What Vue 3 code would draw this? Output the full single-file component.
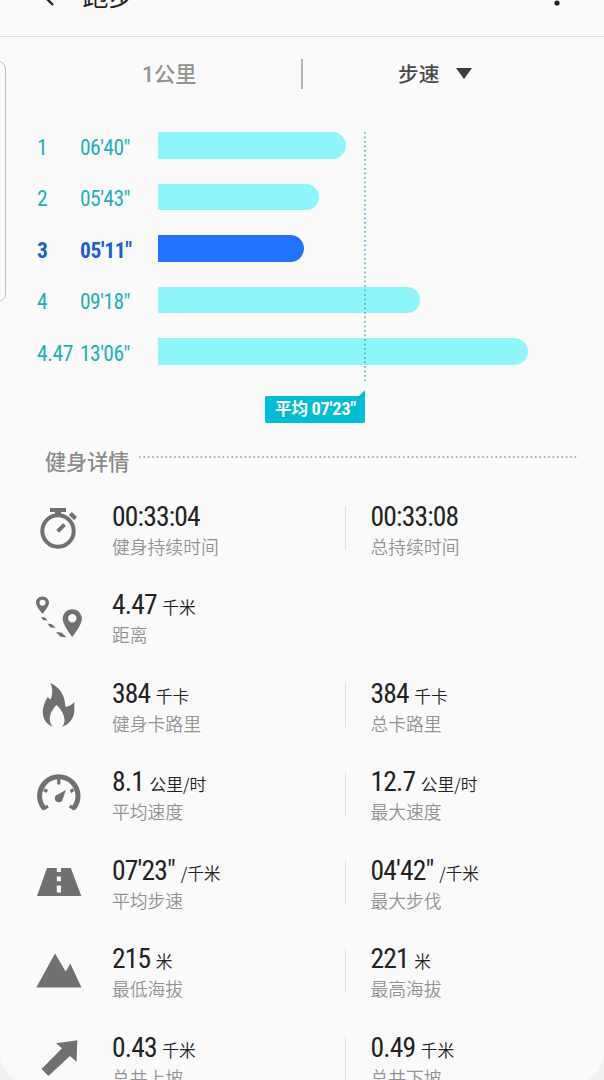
<script setup>
const splits = [
  { id: 1, km: '1', pace: '06\'40"', width: 188 },
  { id: 2, km: '2', pace: '05\'43"', width: 161.5 },
  { id: 3, km: '3', pace: '05\'11"', width: 146.5, best: true },
  { id: 4, km: '4', pace: '09\'18"', width: 262.5 },
  { id: 5, km: '4.47', pace: '13\'06"', width: 370.5 },
]

const rows = [
  { icon: 'watch', cells: [{ v: '00:33:04', l: '健身持续时间' }, { v: '00:33:08', l: '总持续时间' }] },
  { icon: 'route', cells: [{ v: '4.47', u: '千米', l: '距离' }] },
  { icon: 'flame', cells: [{ v: '384', u: '千卡', l: '健身卡路里' }, { v: '384', u: '千卡', l: '总卡路里' }] },
  { icon: 'gauge', cells: [{ v: '8.1', u: '公里/时', l: '平均速度' }, { v: '12.7', u: '公里/时', l: '最大速度' }] },
  { icon: 'road', cells: [{ v: '07\'23"', u: '/千米', l: '平均步速' }, { v: '04\'42"', u: '/千米', l: '最大步伐' }] },
  { icon: 'peak', cells: [{ v: '215', u: '米', l: '最低海拔' }, { v: '221', u: '米', l: '最高海拔' }] },
  { icon: 'arrow', cells: [{ v: '0.43', u: '千米', l: '总共上坡' }, { v: '0.49', u: '千米', l: '总共下坡' }] },
]
</script>

<template>
  <div class="screen">
    <header class="bar">
      <svg class="back" width="20" height="24" viewBox="0 0 20 24"><path d="M14 2 4 12 14 22" fill="none" stroke="#222" stroke-width="2.4" /></svg>
      <h1 class="title">跑步</h1>
      <svg class="more" width="6" height="24" viewBox="0 0 6 24"><circle cx="3" cy="3" r="2.6" /><circle cx="3" cy="12" r="2.6" /><circle cx="3" cy="21" r="2.6" /></svg>
    </header>
    <div class="handle"></div>

    <div class="tabs">
      <div class="tab unit">1公里</div>
      <div class="tab kind">步速<svg class="caret" width="16" height="11" viewBox="0 0 16 11"><path d="M0 0H16L8 11Z" fill="#3c3c3c" /></svg></div>
    </div>

    <section class="chart">
      <div v-for="s in splits" :key="s.id" class="split" :class="{ best: s.best }">
        <span class="km">{{ s.km }}</span>
        <span class="pace">{{ s.pace }}</span>
        <span class="meter" :style="{ width: s.width + 'px' }"></span>
      </div>
      <svg class="avg-line" width="2" height="249" viewBox="0 0 2 249"><path d="M1 0V249" stroke="#2aa3b4" stroke-width="1.3" stroke-dasharray="1.7 2.8" /></svg>
      <div class="avg">平均 <span class="num">07'23"</span><svg class="tip" width="7" height="7" viewBox="0 0 7 7"><path d="M0 7 7 0V7Z" fill="#00bcd4" /></svg></div>
    </section>

    <div class="section-head">
      <h2>健身详情</h2>
      <svg class="dots" width="440" height="2" viewBox="0 0 440 2"><path d="M0 1H440" stroke="#999" stroke-width="1.6" stroke-dasharray="1.6 2.8" /></svg>
    </div>

    <section class="details">
      <div v-for="r in rows" :key="r.icon" class="row">
        <svg class="icon" width="48" height="48" viewBox="0 0 48 48">
          <g v-if="r.icon === 'watch'">
            <circle cx="23" cy="26" r="15.7" fill="none" stroke="#707070" stroke-width="4" />
            <path d="M15 3H31V7H26V11H20V7H15ZM36.8 7 42 12 39 15 33.8 10Z" />
            <path d="M22.6 26.4 29.5 19.6" stroke="#707070" stroke-width="4" />
          </g>
          <g v-else-if="r.icon === 'route'" fill-rule="evenodd">
            <path d="M7.5 2.5C3.8 2.5 1 5.3 1 8.7 1 12.5 7.5 19.7 7.5 19.7S14 12.5 14 8.7C14 5.3 11.2 2.5 7.5 2.5ZM7.5 5.7A3 3 0 1 1 7.5 11.7 3 3 0 1 1 7.5 5.7Z" />
            <path d="M37.3 15.3C31.9 15.3 27.7 19.5 27.7 24.7 27.7 31 37.3 42.9 37.3 42.9S46.9 31 46.9 24.7C46.9 19.5 42.7 15.3 37.3 15.3ZM37.3 20A4.2 4.2 0 1 1 37.3 28.4 4.2 4.2 0 1 1 37.3 20Z" />
            <path d="M6 23 10 23.4 12.8 26.6 8 26ZM12.5 29.5 17 30.2 20.6 34 15 33.3ZM21 38 26.4 38.4 31.5 43.3 25.5 42.8Z" />
          </g>
          <path v-else-if="r.icon === 'flame'" d="M15.2 1C21 3.5 25.5 8 27.8 13 29.8 17.5 30 21 30.6 25 34 24.5 37 22.5 39.4 20 39 25 40 29 38.4 34 36.6 39 32 43.5 26.5 45 28.8 43 29.8 40.5 29.5 37.5 29 31.5 25.5 27 21.5 23 17.5 27 14.6 32 14.8 37.5 15 40.5 16 43 18 44.6 12 43 8.6 38 7.9 32 7.3 26 9.5 21 12.5 15L15.5 17.5C18 12.5 17.8 6 15.2 1Z" />
          <g v-else-if="r.icon === 'gauge'" transform="translate(0 1.7)">
            <path d="M9.4 36A19.2 19.2 0 1 1 38.2 36" fill="none" stroke="#707070" stroke-width="5" />
            <path d="M23.8 5V11.8M9 17 12.2 18.8M38.6 17 35.4 18.8M8 36.3 13 33.4M39.6 36.3 34.6 33.4" stroke="#707070" stroke-width="3.2" />
            <path d="M30.8 17.2 27.7 26.6A4 4 0 1 1 20.9 22.9Z" />
          </g>
          <g v-else-if="r.icon === 'road'" transform="translate(0 -1)">
            <path d="M12 10H21.8V14H26V10H35.8L46.3 38H2Z" />
            <path d="M21.8 18.5H26V23.2H21.8ZM21.8 27.5H26V34.5H21.8Z" fill="#fafafa" />
          </g>
          <path v-else-if="r.icon === 'peak'" d="M1.3 39.5 20 5.5 30.7 23.6 35.3 15.5 46.5 39.5Z" />
          <path v-else d="M42.3 4.2 41.6 25.8 34.9 20 13.5 40 6.5 33 27 12.2 21 7.2Z" />
        </svg>
        <div v-for="c in r.cells" :key="c.l" class="cell">
          <div class="value"><span class="num">{{ c.v }}</span><span v-if="c.u" class="u">{{ c.u }}</span></div>
          <div class="label">{{ c.l }}</div>
        </div>
      </div>
    </section>
    <svg class="corner left" width="22" height="26" viewBox="0 0 22 26"><path d="M0 0Q3 20 16 26H0Z" /></svg>
    <svg class="corner right" width="22" height="26" viewBox="0 0 22 26"><path d="M22 0Q19 20 6 26H22Z" /></svg>
  </div>
</template>

<style>
body { background: #fafafa; overflow: hidden; }
</style>

<style scoped>
.screen { position: relative; width: 604px; height: 1080px; overflow: hidden; background: #fafafa; font-family: Roboto, "Noto Sans CJK SC", sans-serif; color: #222; box-sizing: border-box; }
h1, h2 { margin: 0; }
.bar { height: 36px; border-bottom: 1px solid #dedede; display: flex; align-items: flex-start; }
.back { margin: -17px 0 0 39px; }
.title { margin: -21px 0 0 23.5px; font-size: 26px; line-height: 36px; font-weight: 400; }
.more { margin: -18px 44px 0 auto; fill: #222; }
.handle { position: absolute; left: -13px; top: 61px; width: 17px; height: 239px; border: 1px solid #bdbdbd; border-radius: 8px; background: #fcfcfc; }
.tabs { display: flex; height: 30px; margin-top: 22px; }
.tab { box-sizing: border-box; width: 303px; height: 30px; line-height: 30px; font-size: 21.2px; font-weight: 500; }
.unit { padding-left: 142px; padding-top: 1px; color: #929292; border-right: 2px solid #b4b4b4; }
.kind { width: 301px; padding-left: 95px; padding-top: 1px; color: #4a4a4a; display: flex; align-items: center; font-size: 20.7px; }
.caret { margin-left: 17px; margin-top: -3px; }
.chart { position: relative; margin-top: 43px; height: 309px; }
.split { display: flex; align-items: center; height: 27px; margin-bottom: 24.5px; padding-left: 37px; color: #22b0b8; font-size: 21.5px; letter-spacing: -0.55px; font-stretch: 75%; line-height: 27px; }
.km { width: 43px; position: relative; top: 1.5px; letter-spacing: -0.35px; }
.pace { width: 77.5px; position: relative; top: 1.5px; white-space: nowrap; }
.meter { height: 26.5px; background: #8ef5fa; border-radius: 0 13.5px 13.5px 0; }
.best { color: #1b5fd2; font-weight: 700; letter-spacing: -0.35px; }
.best .meter { background: #2172ff; }
.avg-line { position: absolute; left: 364.3px; top: 0; }
.avg { position: absolute; left: 265px; top: 264px; width: 99.5px; height: 27px; box-sizing: border-box; padding-left: 10px; border-radius: 2px; background: #00bcd4; color: #fff; font-size: 16.5px; line-height: 27px; font-weight: 700; white-space: nowrap; }
.avg .num { font-size: 18.5px; letter-spacing: -0.35px; margin-left: -0.5px; }
.tip { position: absolute; right: 0; top: -6px; }
.num { font-stretch: 75%; }
.section-head { display: flex; height: 36px; padding-left: 45px; margin-top: 2px; }
h2 { font-size: 21.1px; line-height: 39px; font-weight: 500; color: #8b8b8b; width: 94px; }
.dots { margin-top: 13px; }
.details { margin-top: 24px; }
.row { display: flex; height: 88.5px; }
.icon { margin: 2px 29px 0 35px; fill: #707070; flex: none; }
.cell { width: 233px; height: 60px; flex: none; margin-top: -1.5px; }
.cell + .cell { position: relative; padding-left: 24.5px; border-left: 1px solid #dedede; height: 44px; margin-top: 3px; }
.cell + .cell .value { margin-top: -4.5px; }
.value { height: 33px; line-height: 29px; white-space: nowrap; font-size: 27.5px; }
.value .num { letter-spacing: -0.8px; }
.u { font-family: "Noto Sans CJK SC", sans-serif; font-size: 16.7px; margin-left: 5.5px; font-weight: 350; line-height: 1; }
.label { font-size: 17.8px; line-height: 26px; height: 26px; font-weight: 350; color: #929292; white-space: nowrap; }
.corner { position: absolute; bottom: 0; fill: #f1f1f1; }
.left { left: 0; }
.right { right: 0; }
</style>
